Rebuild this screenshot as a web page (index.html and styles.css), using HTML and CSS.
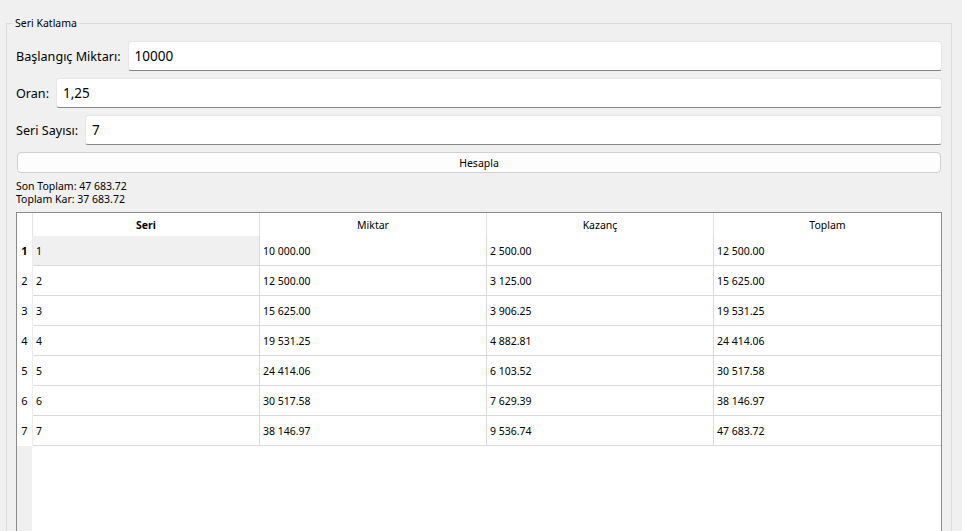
FILE: index.html
```html
<!DOCTYPE html>
<html lang="tr">
<head>
<meta charset="utf-8">
<title>Seri Katlama</title>
<link rel="stylesheet" href="styles.css">
</head>
<body>
<div class="group">
  <span class="group-title">Seri Katlama</span>
  <div class="field"><span class="label">Başlangıç Miktarı:</span><div class="input">10000</div></div>
  <div class="field"><span class="label">Oran:</span><div class="input">1,25</div></div>
  <div class="field"><span class="label">Seri Sayısı:</span><div class="input">7</div></div>
  <button class="btn" type="button">Hesapla</button>
  <div class="summary">
    <div>Son Toplam: 47 683.72</div>
    <div>Toplam Kar: 37 683.72</div>
  </div>
  <div class="grid-wrap">
    <table class="grid">
      <colgroup><col class="c-vh"><col class="c-data"><col class="c-data"><col class="c-data"><col class="c-last"></colgroup>
      <thead>
        <tr><th class="corner"></th><th class="cur">Seri</th><th>Miktar</th><th>Kazanç</th><th class="last">Toplam</th></tr>
      </thead>
      <tbody>
        <tr><th class="vh cur">1</th><td class="sel">1</td><td>10 000.00</td><td>2 500.00</td><td class="last">12 500.00</td></tr>
        <tr><th class="vh">2</th><td>2</td><td>12 500.00</td><td>3 125.00</td><td class="last">15 625.00</td></tr>
        <tr><th class="vh">3</th><td>3</td><td>15 625.00</td><td>3 906.25</td><td class="last">19 531.25</td></tr>
        <tr><th class="vh">4</th><td>4</td><td>19 531.25</td><td>4 882.81</td><td class="last">24 414.06</td></tr>
        <tr><th class="vh">5</th><td>5</td><td>24 414.06</td><td>6 103.52</td><td class="last">30 517.58</td></tr>
        <tr><th class="vh">6</th><td>6</td><td>30 517.58</td><td>7 629.39</td><td class="last">38 146.97</td></tr>
        <tr><th class="vh">7</th><td>7</td><td>38 146.97</td><td>9 536.74</td><td class="last">47 683.72</td></tr>
      </tbody>
    </table>
  </div>
</div>
</body>
</html>
```

FILE: styles.css
```css
html, body {
  margin: 0;
  padding: 0;
  height: 100%;
  overflow: hidden;
}

body {
  background: #f0f0f0;
  font-family: "Noto Sans", "Open Sans", sans-serif;
  color: #000;
}

.group {
  position: relative;
  margin: 23px 10px 0 6px;
  padding: 17px 9px 0 9px;
  border: 1px solid #dcdcdc;
  display: flex;
  flex-direction: column;
  gap: 7px;
}

.group-title {
  position: absolute;
  left: 6px;
  top: -8px;
  padding: 0 2px;
  background: #f0f0f0;
  font-size: 10.5px;
  line-height: 14px;
}

.field {
  display: flex;
  align-items: center;
  gap: 7px;
  height: 30px;
}

.label {
  font-size: 12.6px;
  white-space: nowrap;
}

.input {
  flex: 1;
  height: 30px;
  box-sizing: border-box;
  background: #fff;
  border: 1px solid #e6e6e6;
  border-bottom-color: #858585;
  border-radius: 3px;
  padding-left: 6px;
  font-size: 13.5px;
  line-height: 28px;
}

.btn {
  margin: 0 1px;
  height: 21px;
  box-sizing: border-box;
  border: 1px solid #d0d0d0;
  border-radius: 4px;
  background: #fdfdfd;
  font-family: inherit;
  font-size: 10.5px;
  color: #000;
  padding: 0;
}

.summary {
  font-size: 10.5px;
  line-height: 13px;
  margin-bottom: -1px;
}

.grid-wrap {
  height: 360px;
  border: 1px solid #8a8a8a;
  background: linear-gradient(to right, #f0f0f0 15px, #fff 15px);
}

.grid {
  border-collapse: separate;
  border-spacing: 0;
  table-layout: fixed;
  width: 924px;
  font-size: 10.5px;
}

.c-vh { width: 16px; }
.c-data { width: 227px; }
.c-last { width: 227px; }

.grid th, .grid td {
  padding: 0;
  border-right: 1px solid #dadada;
  white-space: nowrap;
  overflow: hidden;
}

.grid thead th {
  height: 23px;
  font-weight: normal;
  text-align: center;
  background: #fff;
  border-right-color: #e3e3e3;
}

.grid thead th.cur {
  font-weight: bold;
}

.grid th.last, .grid td.last {
  border-right: none;
}

.grid td {
  height: 29px;
  border-bottom: 1px solid #dadada;
  padding-left: 3px;
  background: #fff;
}

.grid td.sel {
  background: #f0f0f0;
}

.grid th.vh {
  height: 29px;
  background: #fff;
  font-weight: normal;
  text-align: center;
  border-bottom: 1px solid #fff;
  border-right-color: #ececec;
  font-size: 11px;
}

.grid th.vh.cur {
  font-weight: bold;
}
```
